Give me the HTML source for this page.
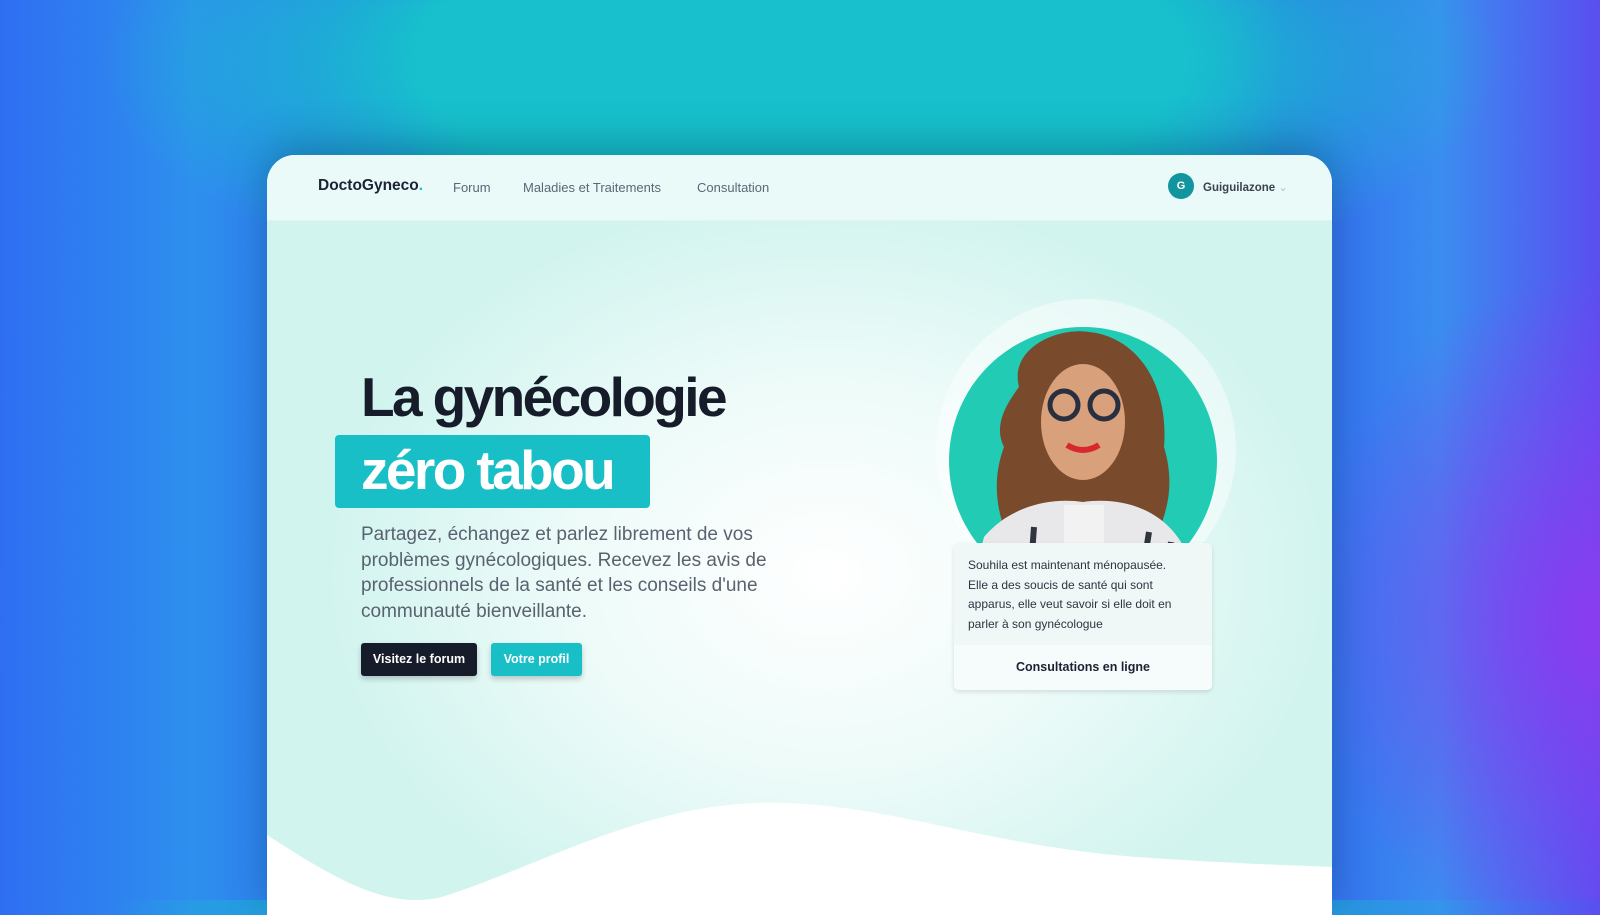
<!DOCTYPE html>
<html><head><meta charset="utf-8"><style>
*{margin:0;padding:0;box-sizing:border-box}
body{width:1600px;height:900px;overflow:hidden;font-family:"Liberation Sans",sans-serif;position:relative;
background:radial-gradient(ellipse 700px 260px at 800px 60px,#17c0cc 0%,#17c0cc 55%,rgba(23,192,204,0) 100%),
radial-gradient(ellipse 420px 500px at 1600px 620px,#8a3cf0 0%,rgba(138,60,240,0) 70%),
linear-gradient(90deg,#2f6ef2 0%,#2e8fee 12%,#2f6ef2 25%,#17bfcc 40%,#17bfcc 60%,#3366f0 80%,#3a8df0 90%,#5a4ef0 100%);}
.win{position:absolute;left:267px;top:155px;width:1065px;height:760px;border-radius:28px 28px 0 0;overflow:hidden;
background:radial-gradient(ellipse 500px 380px at 560px 420px,#ffffff 0%,#eefbf9 50%,#d2f4ef 100%);box-shadow:0 -10px 40px rgba(0,60,80,.35)}
.nav{position:absolute;left:0;top:0;width:100%;height:66px;background:#eafaf9;border-bottom:1px solid #e0f5f3}
.logo{position:absolute;left:51px;top:22px;font-weight:bold;font-size:15.5px;color:#1c2233}
.logo span{color:#18c0c4}
.nl{position:absolute;top:25px;font-size:13px;color:#5d6676}
.av{position:absolute;left:901px;top:18px;width:26px;height:26px;border-radius:50%;background:#12959e;color:#fff;font-size:11px;font-weight:bold;text-align:center;line-height:26px}
.user{position:absolute;left:936px;top:25px;font-size:11.5px;color:#3a4150;font-weight:bold}
h1{position:absolute;left:94px;top:210px;font-size:55px;letter-spacing:-2.6px;color:#161c2a;font-weight:bold}
.hl{position:absolute;left:68px;top:280px;width:315px;height:73px;background:#19bfc6;border-radius:4px}
.hl span{position:absolute;left:26px;top:3px;font-size:55px;letter-spacing:-2.6px;color:#fff;font-weight:bold}
p.t{position:absolute;left:94px;top:367px;width:420px;font-size:19px;line-height:25.5px;color:#5a6270}
.b1,.b2{position:absolute;top:488px;height:33px;border-radius:3px;color:#fff;font-size:12.5px;font-weight:bold;text-align:center;line-height:33px;box-shadow:0 3px 6px rgba(0,0,0,.2)}
.b1{left:94px;width:116px;background:#161c2a}
.b2{left:224px;width:91px;background:#19bfc6}
.halo{position:absolute;left:669px;top:144px;width:300px;height:300px;border-radius:50%;background:rgba(255,255,255,.45)}
.circ{position:absolute;left:682px;top:172px;width:268px;height:268px;border-radius:50%;background:#22cbb3;overflow:hidden}
.card{position:absolute;left:687px;top:388px;width:258px;height:147px;background:#eff8f7;border-radius:5px;box-shadow:0 2px 5px rgba(0,0,0,.12)}
.card p{position:absolute;left:14px;top:13px;font-size:12px;line-height:19.5px;color:#2e3440;width:215px}
.card .f{position:absolute;left:0;top:102px;width:100%;height:45px;background:#f6fbfb;border-radius:0 0 5px 5px;text-align:center;line-height:45px;font-size:12.5px;font-weight:bold;color:#1c2233}
</style></head><body>
<div class="win">
<div class="nav">
<div class="logo">DoctoGyneco<span>.</span></div>
<div class="nl" style="left:186px">Forum</div>
<div class="nl" style="left:256px">Maladies et Traitements</div>
<div class="nl" style="left:430px">Consultation</div>
<div class="av">G</div>
<div class="user">Guiguilazone <span style="color:#b8bfc6;font-weight:normal">&#8964;</span></div>
</div>
<h1>La gynécologie</h1>
<div class="hl"><span>zéro tabou</span></div>
<p class="t">Partagez, échangez et parlez librement de vos problèmes gynécologiques. Recevez les avis de professionnels de la santé et les conseils d'une communauté bienveillante.</p>
<div class="b1">Visitez le forum</div>
<div class="b2">Votre profil</div>
<div class="halo"></div>
<div class="circ">
<svg width="268" height="268" viewBox="0 0 268 268">
<path d="M70 60 C60 20 110 0 140 5 C190 10 220 60 215 120 C230 170 210 200 200 230 L70 230 C50 200 40 160 55 120 C45 100 55 80 70 60Z" fill="#7a4a2c"/>
<path d="M20 268 L35 210 C60 180 100 170 134 175 C170 170 210 180 232 215 L248 268Z" fill="#e8e8ea"/>
<path d="M40 268 L50 220 L60 268 M80 268 L85 200 M190 268 L200 205 M215 268 L222 215" stroke="#30343e" stroke-width="6" fill="none"/>
<rect x="115" y="178" width="40" height="90" fill="#f2f2f2"/>
<ellipse cx="134" cy="95" rx="42" ry="58" fill="#d9a07c"/>
<circle cx="115" cy="78" r="14" fill="none" stroke="#283040" stroke-width="5"/>
<circle cx="155" cy="78" r="14" fill="none" stroke="#283040" stroke-width="5"/>
<path d="M118 118 Q134 128 150 118" stroke="#d8282f" stroke-width="6" fill="none"/>
</svg>
</div>
<div class="card"><p>Souhila est maintenant ménopausée. Elle a des soucis de santé qui sont apparus, elle veut savoir si elle doit en parler à son gynécologue</p><div class="f">Consultations en ligne</div></div>
<svg style="position:absolute;left:0;top:630px" width="1065" height="140" viewBox="0 0 1065 140">
<path d="M0 50 C70 95 120 125 175 112 C270 82 370 22 490 18 C610 14 710 60 870 72 C970 79 1020 80 1065 82 L1065 140 L0 140Z" fill="#fff"/>
</svg>
</div>
</body></html>
